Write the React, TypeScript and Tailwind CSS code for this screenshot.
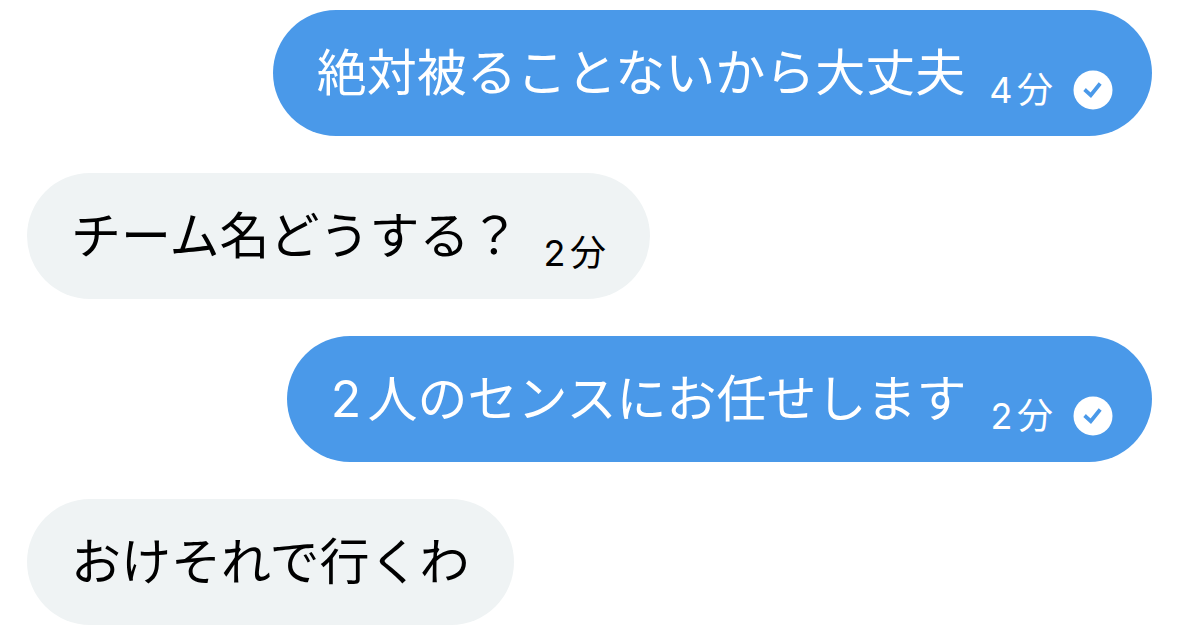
type Message = {
  id: number;
  text: string;
  time?: string;
  mine: boolean;
};

const MESSAGES: Message[] = [
  { id: 1, text: "絶対被ることないから大丈夫", time: "4分", mine: true },
  { id: 2, text: "チーム名どうする？", time: "2分", mine: false },
  { id: 3, text: "2人のセンスにお任せします", time: "2分", mine: true },
  { id: 4, text: "おけそれで行くわ", mine: false },
];

function ReadMark() {
  return (
    <svg viewBox="0 0 40 40" className="ml-5 size-10 shrink-0" role="img" aria-label="既読">
      <circle cx="20" cy="20" r="19.5" fill="#fff" />
      <path
        d="M13 20.8l4.8 4.4 8.2-10.2"
        fill="none"
        stroke="#4a99e9"
        strokeWidth="3.8"
        strokeLinecap="square"
      />
    </svg>
  );
}

function Bubble({ message }: { message: Message }) {
  const { text, time, mine } = message;

  return (
    <li
      className={
        mine
          ? "flex h-[126px] items-center self-end rounded-full bg-[#4a99e9] pr-[39px] pl-11 text-white"
          : "flex h-[126px] items-center self-start rounded-full bg-[#eff3f4] px-11 text-black"
      }
    >
      <p className="text-[50px] leading-[60px] whitespace-nowrap">{text}</p>
      {time && (
        <div className="mt-[34px] ml-6 flex items-center">
          <span className="text-[36px] leading-10 whitespace-nowrap">{time}</span>
          {mine && <ReadMark />}
        </div>
      )}
    </li>
  );
}

export default function App() {
  return (
    <main
      lang="ja"
      className="min-h-screen bg-white px-[27px] pt-[10px] font-['Inter','Noto_Sans_CJK_JP',sans-serif] [text-autospace:normal]"
    >
      <ul className="flex flex-col gap-[37px]">
        {MESSAGES.map((message) => (
          <Bubble key={message.id} message={message} />
        ))}
      </ul>
    </main>
  );
}
